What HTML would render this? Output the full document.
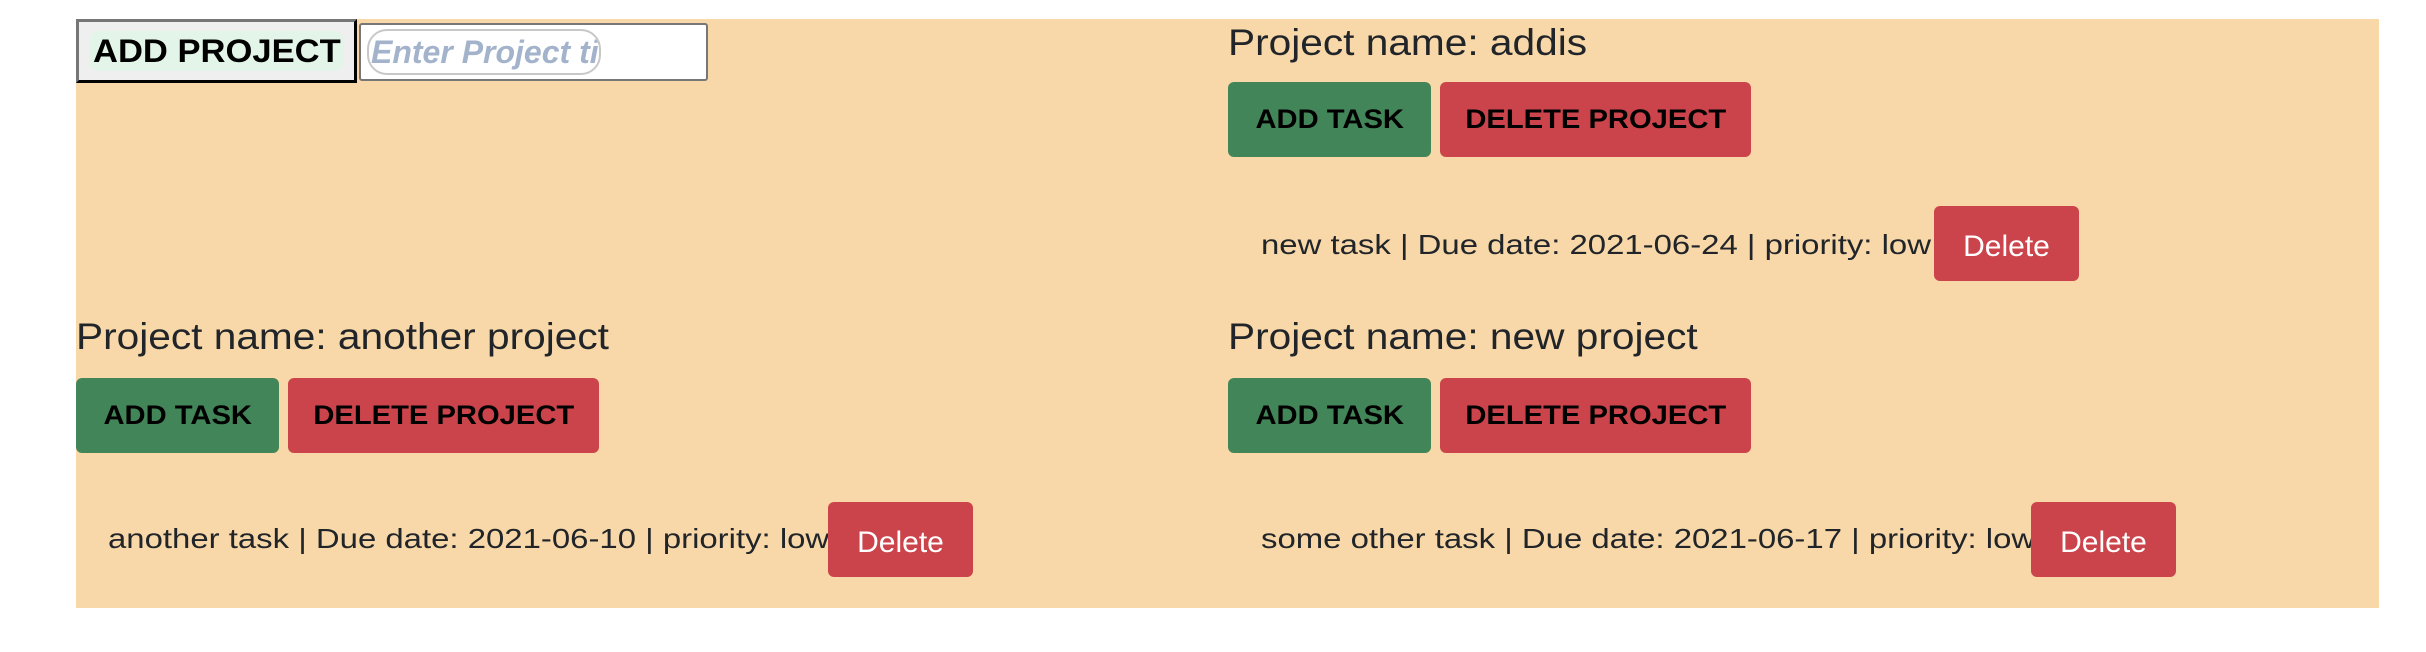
<!DOCTYPE html>
<html><head><meta charset="utf-8"><style>
*{box-sizing:border-box;margin:0;padding:0}
body{width:2426px;height:652px;background:#fff;position:relative;overflow:hidden;font-family:"Liberation Sans",Arial,sans-serif;color:#212529}
.bg{position:absolute;left:76px;top:19px;width:2303px;height:589px;background:#f8d8a8}
.abs{position:absolute}
.s{display:inline-block;transform-origin:left center;white-space:nowrap}
.addp{left:76px;top:19px;width:281px;height:64px;background:#efefef;border:3px outset #777;border-color:#767676 #2a2a2a #2a2a2a #767676}
.addp .in{position:absolute;left:10px;top:9px;height:40px;width:255px;background:#e2f5e8;border-radius:10px}
.addp .t{position:absolute;left:14px;top:9px;font-weight:bold;font-size:32px;line-height:40px;color:#000;transform:scaleX(1.08)}
.inp{left:359px;top:23px;width:349px;height:58px;background:#fff;border:2px solid #777;border-radius:3px}
.inp span{position:absolute;left:6px;top:4px;width:234px;height:46px;border:2px solid #c8c8c8;border-radius:20px;font-style:italic;font-weight:bold;font-size:32px;line-height:42px;color:#a3b3cb;overflow:hidden;white-space:nowrap;padding-left:2px}
h3{position:absolute;font-weight:normal;font-size:37px;line-height:44px;white-space:nowrap;transform:scaleX(1.098);transform-origin:left center}
.btn{position:absolute;height:75px;border-radius:6px;font-weight:bold;font-size:27px;line-height:75px;text-align:center;color:#000}
.btn .s{transform:scaleX(1.08);transform-origin:center}
.g{background:#428558;width:203px}
.r{background:#cc444b;width:311px}
.task{position:absolute;font-size:28px;line-height:40px;white-space:nowrap;transform:scaleX(1.175);transform-origin:left center}
.del{position:absolute;width:145px;height:75px;border-radius:6px;background:#cc444b;color:#fff;font-size:30px;line-height:81px;text-align:center}
</style></head><body>
<div class="bg"></div>
<div class="abs addp"><div class="in"></div><span class="t s">ADD PROJECT</span></div>
<div class="abs inp"><span>Enter Project title</span></div>

<h3 style="left:1228px;top:21px">Project name: addis</h3>
<div class="btn g" style="left:1228px;top:82px"><span class="s">ADD TASK</span></div>
<div class="btn r" style="left:1440px;top:82px"><span class="s">DELETE PROJECT</span></div>
<div class="task" style="left:1261px;top:225px">new task | Due date: 2021-06-24 | priority: low</div>
<div class="del" style="left:1934px;top:206px">Delete</div>

<h3 style="left:76px;top:315px">Project name: another project</h3>
<div class="btn g" style="left:76px;top:378px"><span class="s">ADD TASK</span></div>
<div class="btn r" style="left:288px;top:378px"><span class="s">DELETE PROJECT</span></div>
<div class="task" style="left:108px;top:519px">another task | Due date: 2021-06-10 | priority: low</div>
<div class="del" style="left:828px;top:502px">Delete</div>

<h3 style="left:1228px;top:315px">Project name: new project</h3>
<div class="btn g" style="left:1228px;top:378px"><span class="s">ADD TASK</span></div>
<div class="btn r" style="left:1440px;top:378px"><span class="s">DELETE PROJECT</span></div>
<div class="task" style="left:1261px;top:519px">some other task | Due date: 2021-06-17 | priority: low</div>
<div class="del" style="left:2031px;top:502px">Delete</div>
</body></html>
